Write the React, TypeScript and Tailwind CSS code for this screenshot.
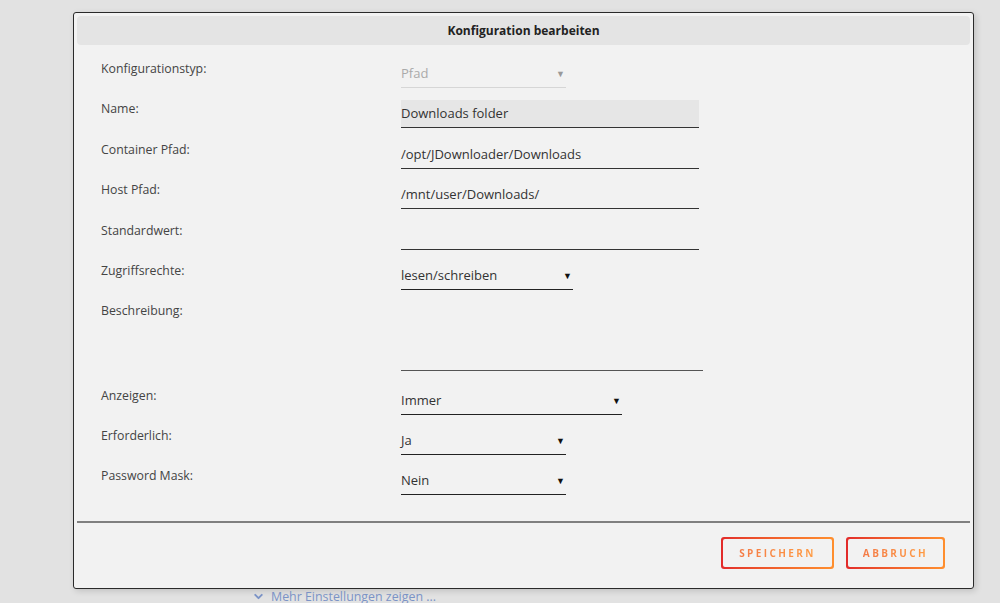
import { ChevronDown } from 'lucide-react';

const font = { fontFamily: '"Open Sans", "Liberation Sans", sans-serif' };

const Label = ({ text }: { text: string }) => (
  <div className="w-[324px] shrink-0 pl-[24px] leading-[26px] text-[12.3px] text-[#444]">{text}</div>
);

const SelectField = ({ value, width, muted }: { value: string; width: string; muted?: boolean }) => (
  <div
    className={`mt-[4px] flex h-[28px] items-center justify-between border-b ${width} ${
      muted ? 'border-[#d6d6d6] text-[#aaa]' : 'border-[#222] text-[#333]'
    }`}
  >
    <span className="text-[13px]">{value}</span>
    <span className={`pr-[1px] text-[9px] ${muted ? 'text-[#999]' : 'text-[#111]'}`}>▼</span>
  </div>
);

const TextField = ({ value, shaded, width = 'w-[298px]' }: { value?: string; shaded?: boolean; width?: string }) => (
  <div
    className={`mt-[4px] flex h-[28px] items-center border-b border-[#333] text-[13px] text-[#333] ${width} ${
      shaded ? 'bg-[#e6e6e6]' : ''
    }`}
  >
    {value}
  </div>
);

const GradientButton = ({ text, width }: { text: string; width: string }) => (
  <div className={`rounded-[3px] bg-gradient-to-r from-[#e22a2a] to-[#ff8f2e] p-[2px] ${width}`}>
    <div className="flex h-[28px] items-center justify-center rounded-[2px] bg-[#f2f2f2]">
      <span className="bg-gradient-to-r from-[#f47a45] to-[#ff9d45] bg-clip-text text-[10px] font-bold tracking-[2.4px] text-transparent">
        {text}
      </span>
    </div>
  </div>
);

export default function App() {
  return (
    <div className="h-[603px] w-[1000px] overflow-hidden bg-[#e2e2e2]" style={font}>
      <div className="pl-[73px] pt-[12px]">
        <div className="h-[577px] w-[901px] rounded-[3px] border border-[#2a2a2a] bg-[#f2f2f2] px-[3px] pt-[3px] shadow-[2px_2px_6px_rgba(0,0,0,0.15)]">
          <div className="flex h-[29px] items-center justify-center rounded-[4px] bg-[#e4e4e4] text-[12px] font-bold text-[#222]">
            Konfiguration bearbeiten
          </div>

          <div className="mt-[11px] flex flex-col">
            <div className="flex h-[40px]">
              <Label text="Konfigurationstyp:" />
              <SelectField value="Pfad" width="w-[165px]" muted />
            </div>
            <div className="flex h-[41px]">
              <Label text="Name:" />
              <TextField value="Downloads folder" shaded />
            </div>
            <div className="flex h-[40px]">
              <Label text="Container Pfad:" />
              <TextField value="/opt/JDownloader/Downloads" />
            </div>
            <div className="flex h-[41px]">
              <Label text="Host Pfad:" />
              <TextField value="/mnt/user/Downloads/" />
            </div>
            <div className="flex h-[40px]">
              <Label text="Standardwert:" />
              <TextField />
            </div>
            <div className="flex h-[40px]">
              <Label text="Zugriffsrechte:" />
              <SelectField value="lesen/schreiben" width="w-[172px]" />
            </div>
            <div className="flex h-[85px]">
              <Label text="Beschreibung:" />
              <div className="mt-[4px] h-[69px] w-[302px] border-b border-[#555]" />
            </div>
            <div className="flex h-[40px]">
              <Label text="Anzeigen:" />
              <SelectField value="Immer" width="w-[221px]" />
            </div>
            <div className="flex h-[40px]">
              <Label text="Erforderlich:" />
              <SelectField value="Ja" width="w-[165px]" />
            </div>
            <div className="flex h-[40px]">
              <Label text="Password Mask:" />
              <SelectField value="Nein" width="w-[165px]" />
            </div>
          </div>

          <div className="mt-[18px] h-[2px] bg-[#808080]" />

          <div className="flex justify-end gap-[12px] pr-[25px] pt-[14px]">
            <GradientButton text="SPEICHERN" width="w-[113px]" />
            <GradientButton text="ABBRUCH" width="w-[99px]" />
          </div>
        </div>
        <div className="flex items-center gap-[6px] pl-[179px] text-[12.4px] leading-[15px] text-[#7b93c6]">
          <ChevronDown size={13} strokeWidth={3.5} />
          <span>Mehr Einstellungen zeigen ...</span>
        </div>
      </div>
    </div>
  );
}
